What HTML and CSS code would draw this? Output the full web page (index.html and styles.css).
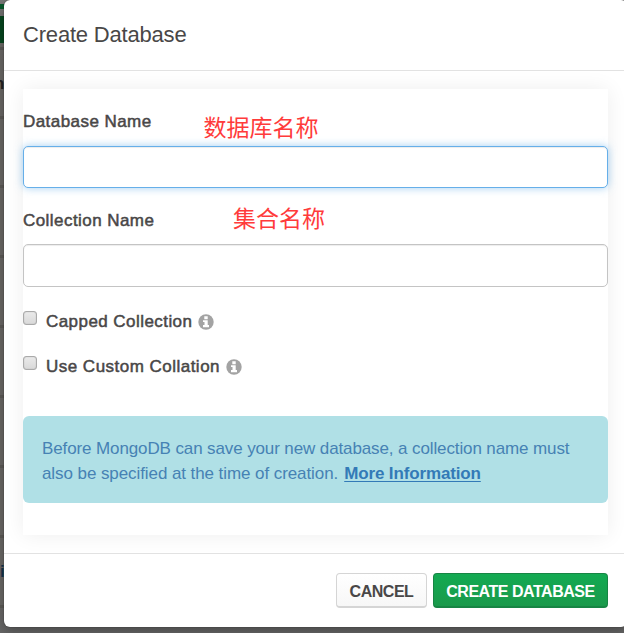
FILE: index.html
```
<!DOCTYPE html>
<html lang="en">
<head>
<meta charset="utf-8">
<title>Create Database</title>
<link rel="stylesheet" href="styles.css">
</head>
<body>
<div class="backdrop" aria-hidden="true">
  <i class="bar bar-top"></i>
  <i class="bar bar-button"></i>
  <i class="rule r1"></i><i class="rule r2"></i><i class="rule r3"></i><i class="rule r4"></i>
  <i class="rule r5"></i><i class="rule r6"></i><i class="rule r7"></i><i class="rule r8"></i><i class="rule r9"></i>
  <span class="peek peek-name">n</span>
  <span class="peek peek-link">i</span>
</div>
<main class="modal">
  <header class="modal-header"><h1>Create Database</h1></header>
  <div class="modal-body">
    <form class="form">
      <div class="label-row"><label class="label" for="db">Database Name</label><span class="note">数据库名称</span></div>
      <input class="field focused" id="db" type="text">
      <div class="label-row second"><label class="label" for="col">Collection Name</label><span class="note note-col">集合名称</span></div>
      <input class="field" id="col" type="text">
      <div class="option">
        <span class="box"></span><span class="label">Capped Collection</span>
        <svg class="info" viewBox="0 0 16 16"><circle cx="8" cy="8" r="7.7"/><path d="M6.3 2.3h3.4v2.9H6.3zM5 6.2h4.7v4.9H11v2.1H5v-2.1h1.5V8.1H5z"/></svg>
      </div>
      <div class="option">
        <span class="box"></span><span class="label t-use">Use Custom Collation</span>
        <svg class="info" viewBox="0 0 16 16"><circle cx="8" cy="8" r="7.7"/><path d="M6.3 2.3h3.4v2.9H6.3zM5 6.2h4.7v4.9H11v2.1H5v-2.1h1.5V8.1H5z"/></svg>
      </div>
      <div class="alert">
        <div class="line1">Before MongoDB can save your new database, a collection name must</div>
        <div class="line2"><span class="t-also">also be specified at the time of creation.</span><a class="more">More Information</a></div>
      </div>
    </form>
  </div>
  <footer class="modal-footer">
    <button class="btn cancel" type="button">CANCEL</button>
    <button class="btn create" type="button">CREATE DATABASE</button>
  </footer>
</main>
</body>
</html>
```
FILE: styles.css
```
* { box-sizing: border-box; }
body {
  margin: 0;
  width: 624px;
  height: 633px;
  position: relative;
  overflow: hidden;
  background: #666461;
  font-family: "Liberation Sans", Arial, sans-serif;
  color: #494747;
}
.backdrop { position: absolute; inset: 0; background: linear-gradient(#777 0, #6e6c69 30px, #6a6865 60px, #6a6865 600px, #666 633px); }
.bar, .rule, .peek { position: absolute; left: 0; }
.bar { width: 8px; }
.bar-top { top: 4px; height: 5px; background: #07592b; }
.bar-button { top: 16px; height: 27px; background: #06461f; }
.rule { width: 5px; height: 3px; background: #5c5a57; }
.r1 { top: 47px; } .r2 { top: 116px; } .r3 { top: 185px; } .r4 { top: 255px; }
.r5 { top: 325px; } .r6 { top: 395px; } .r7 { top: 465px; } .r8 { top: 535px; } .r9 { top: 605px; }
.peek { font-size: 17px; line-height: 20px; font-weight: bold; }
.peek-name { top: 74px; left: -6px; color: #222; }
.peek-link { top: 562px; left: 0; color: #13334d; }
.modal {
  position: relative;
  margin-left: 4px;
  width: 623px;
  height: 627px;
  background: #fff;
  border-radius: 6px;
  box-shadow: 0 4px 12px rgba(0, 0, 0, .3), 0 0 1px #222;
}
.modal-header { height: 71px; padding: 21px 19px 0; border-bottom: 1px solid #e2e2e2; }
h1 { margin: 0; font-size: 22px; line-height: 28px; font-weight: normal; letter-spacing: -.19px; }
.modal-body { padding: 18px 19px; }
.form { height: 446px; padding-top: 19px; background: #fff; box-shadow: 0 0 20px rgba(0, 0, 0, .07); }
.label-row { display: flex; height: 38px; }
.label-row.second { height: 56px; padding-top: 18px; }
.label { font-size: 17px; line-height: 28px; letter-spacing: .44px; -webkit-text-stroke: .5px currentColor; white-space: nowrap; }
.t-use { letter-spacing: .48px; }
.label-row .label { width: 180.5px; }
.label-row.second .label { width: 210px; line-height: 29px; }
.note { font-family: "Noto Sans CJK SC", sans-serif; color: #ff3b3b; font-size: 23px; line-height: 30px; margin-top: 3px; white-space: nowrap; }
.note-col { margin-top: -4px; }
.field {
  display: block;
  width: 100%;
  height: 43px;
  border: 1px solid #c4c4c4;
  border-radius: 5px;
  background: #fff;
  box-shadow: inset 0 1px 1px rgba(0, 0, 0, .075);
  outline: 0;
}
.focused { height: 42px; border-color: #66afe9; box-shadow: inset 0 1px 1px rgba(0, 0, 0, .075), 0 0 9px rgba(102, 175, 233, .6); }
.option { display: flex; height: 45px; padding-top: 21px; align-items: flex-start; }
.box { width: 14px; height: 14px; margin: 3px 9px 0 0; border: 1px solid #aaa; border-radius: 3px; background: linear-gradient(#eaeaea, #d9d9d9); box-shadow: inset 0 0 1px #999; }
.info { width: 16px; height: 16px; margin: 6px 0 0 6px; fill: #a3a3a3; }
.info path { fill: #fff; }
.alert {
  margin-top: 39px;
  height: 87px;
  padding: 20px 19px;
  border-radius: 6px;
  background: #b0e0e6;
  color: #4682b4;
  font-size: 17px;
  line-height: 25px;
  white-space: nowrap;
}
.line1 { letter-spacing: -.115px; }
.t-also { letter-spacing: -.08px; }
.more { margin-left: 6px; letter-spacing: -.14px; color: #337ab7; font-weight: bold; text-decoration: underline; text-decoration-thickness: 1px; text-underline-offset: 2px; }
.modal-footer { display: flex; justify-content: flex-end; gap: 6px; padding: 19px 19px 0; border-top: 1px solid #e2e2e2; height: 74px; }
.btn {
  height: 35px;
  padding: 3px 0 0;
  border: 1px solid #d5d5d5;
  border-bottom: 2px solid #d5d5d5;
  border-radius: 4px;
  font: bold 16px/29px "Liberation Sans", Arial, sans-serif;
  letter-spacing: -.47px;
  white-space: nowrap;
}
.cancel { width: 91px; background: linear-gradient(#fff, #f7f7f7); color: #494747; }
.create { width: 175px; background: linear-gradient(#13aa52, #1a9a4b); border-color: #178544; color: #fff; }
```
